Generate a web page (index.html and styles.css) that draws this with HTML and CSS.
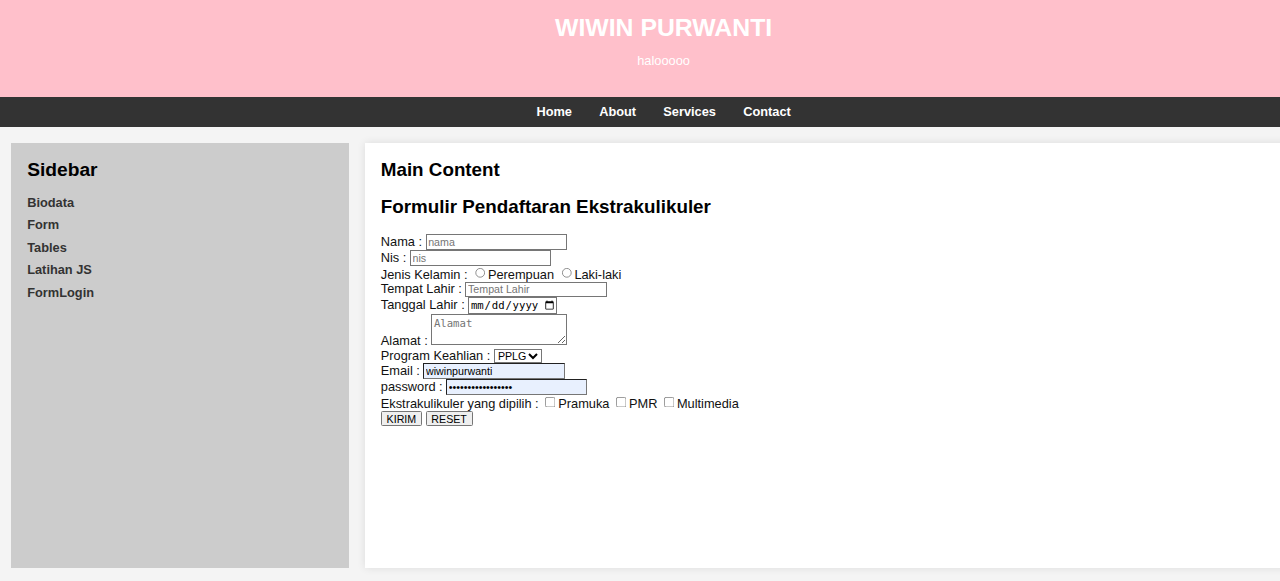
FILE: index.html
```html
<!DOCTYPE html>
<html lang="id">
<head>
<meta charset="utf-8">
<title>WIWIN PURWANTI</title>
<link rel="stylesheet" href="styles.css">
</head>
<body class="site">
<div class="page">
  <header class="masthead">
    <h1 class="masthead-title">WIWIN PURWANTI</h1>
    <p class="masthead-sub">halooooo</p>
  </header>
  <nav class="topnav">
    <a href="#" class="topnav-link">Home</a>
    <a href="#" class="topnav-link">About</a>
    <a href="#" class="topnav-link">Services</a>
    <a href="#" class="topnav-link">Contact</a>
  </nav>
  <div class="layout">
    <aside class="sidebar">
      <h2 class="sidebar-title">Sidebar</h2>
      <ul class="sidebar-list">
        <li class="sidebar-item"><a href="#" class="sidebar-link">Biodata</a></li>
        <li class="sidebar-item"><a href="#" class="sidebar-link">Form</a></li>
        <li class="sidebar-item"><a href="#" class="sidebar-link">Tables</a></li>
        <li class="sidebar-item"><a href="#" class="sidebar-link">Latihan JS</a></li>
        <li class="sidebar-item"><a href="#" class="sidebar-link">FormLogin</a></li>
      </ul>
    </aside>
    <main class="content">
      <h2 class="content-title">Main Content</h2>
      <h2 class="content-title">Formulir Pendaftaran Ekstrakulikuler</h2>
      <form class="reg-form">
        <label>Nama : </label><input type="text" class="field" placeholder="nama"><br>
        <label>Nis : </label><input type="text" class="field" placeholder="nis"><br>
        <label>Jenis Kelamin : </label><input type="radio" name="jk">Perempuan <input type="radio" name="jk">Laki-laki<br>
        <label>Tempat Lahir : </label><input type="text" class="field" placeholder="Tempat Lahir"><br>
        <label>Tanggal Lahir : </label><input type="date" class="field-date"><br>
        <label>Alamat : </label><textarea class="field-area" placeholder="Alamat"></textarea><br>
        <label>Program Keahlian : </label><select class="field-select"><option>PPLG</option><option>TJKT</option></select><br>
        <label>Email : </label><input type="email" class="field autofilled" value="wiwinpurwanti"><br>
        <label>password : </label><input type="password" class="field autofilled" value="wiwinpurwanti1234"><br>
        <label>Ekstrakulikuler yang dipilih : </label><input type="checkbox">Pramuka <input type="checkbox">PMR <input type="checkbox">Multimedia<br>
        <input type="submit" value="KIRIM"> <input type="reset" value="RESET">
      </form>
    </main>
  </div>
</div>
</body>
</html>
```

FILE: styles.css
```css
html {
  zoom: 0.8;
}

.site {
  margin: 0;
  background: #f4f4f4;
  font-family: Arial, "Liberation Sans", sans-serif;
  color: #000;
  overflow: hidden;
}

.page {
  width: 1659px;
}

.masthead {
  background: #ffc0cb;
  color: #fff;
  text-align: center;
  height: 121px;
  box-sizing: border-box;
  padding-top: 16px;
}

.masthead-title {
  margin: 0;
  font-size: 31px;
  line-height: 37px;
  font-weight: bold;
}

.masthead-sub {
  margin: 14px 0 0;
  font-size: 16px;
  line-height: 18px;
}

.topnav {
  background: #333;
  height: 38px;
  display: flex;
  justify-content: center;
  align-items: center;
  gap: 34px;
}

.topnav-link {
  color: #fff;
  font-weight: bold;
  font-size: 16px;
  text-decoration: none;
}

.layout {
  display: flex;
  gap: 20px;
  padding: 20px 14px 16px 14px;
}

.sidebar {
  width: 422px;
  height: 531px;
  box-sizing: border-box;
  background: #ccc;
  padding: 19.5px 20px;
  flex-shrink: 0;
}

.sidebar-title {
  margin: 0 0 18.5px;
  font-size: 24px;
  line-height: 28px;
}

.sidebar-list {
  list-style: none;
  margin: 0;
  padding: 0;
}

.sidebar-item {
  margin-bottom: 10px;
  line-height: 18px;
}

.sidebar-link {
  color: #333;
  font-weight: bold;
  font-size: 16px;
  text-decoration: none;
}

.content {
  flex: 1;
  height: 531px;
  box-sizing: border-box;
  background: #fff;
  padding: 19.5px 20px;
  box-shadow: 0 0 10px rgba(0, 0, 0, 0.1);
}

.content-title {
  margin: 0 0 19px;
  font-size: 23.5px;
  line-height: 28px;
}

.reg-form {
  font-size: 16px;
  color: #111;
}

.field {
  width: 170px;
}

.field-date {
  width: 108px;
}

.field-area {
  width: 163px;
}

.field-select {
  width: 60px;
}

.autofilled {
  background-color: #e8f0fe;
}
```
